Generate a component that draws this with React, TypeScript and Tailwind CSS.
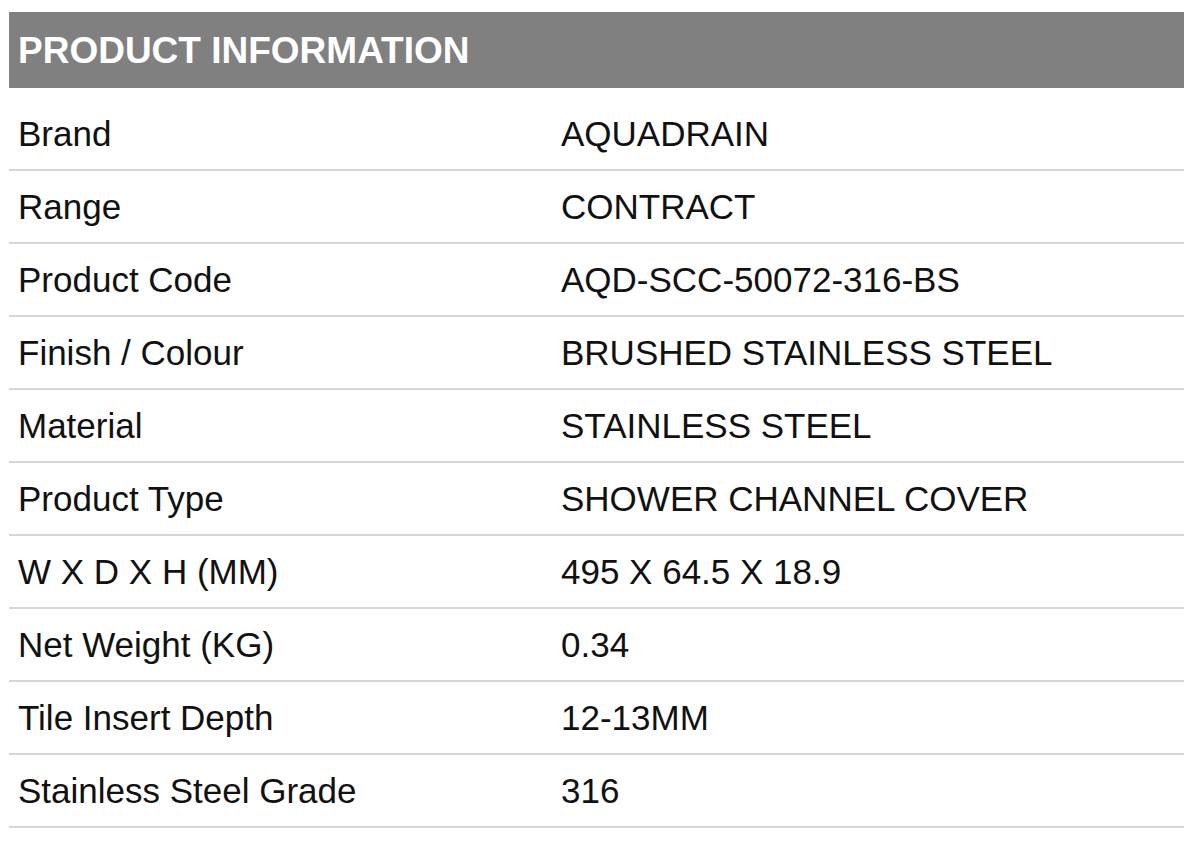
const rows: [string, string][] = [
  ["Brand", "AQUADRAIN"],
  ["Range", "CONTRACT"],
  ["Product Code", "AQD-SCC-50072-316-BS"],
  ["Finish / Colour", "BRUSHED STAINLESS STEEL"],
  ["Material", "STAINLESS STEEL"],
  ["Product Type", "SHOWER CHANNEL COVER"],
  ["W X D X H (MM)", "495 X 64.5 X 18.9"],
  ["Net Weight (KG)", "0.34"],
  ["Tile Insert Depth", "12-13MM"],
  ["Stainless Steel Grade", "316"],
]

export default function App() {
  return (
    <div className="min-h-[846px] bg-white pt-[12px] pl-[9px] pr-[16px] font-['Liberation_Sans',Arial,sans-serif]">
      <div className="flex h-[76px] items-center bg-[#808080] pl-[9px]">
        <h2 className="text-[37px] font-bold leading-none text-white">PRODUCT INFORMATION</h2>
      </div>
      <div className="mt-[10px]">
        {rows.map(([label, value]) => (
          <div
            key={label}
            className="flex h-[73px] items-center border-b-2 border-[#d6d6d6] text-[35px] leading-none text-[#111111]"
          >
            <div className="w-[552px] shrink-0 pl-[9px]">{label}</div>
            <div>{value}</div>
          </div>
        ))}
      </div>
    </div>
  )
}
